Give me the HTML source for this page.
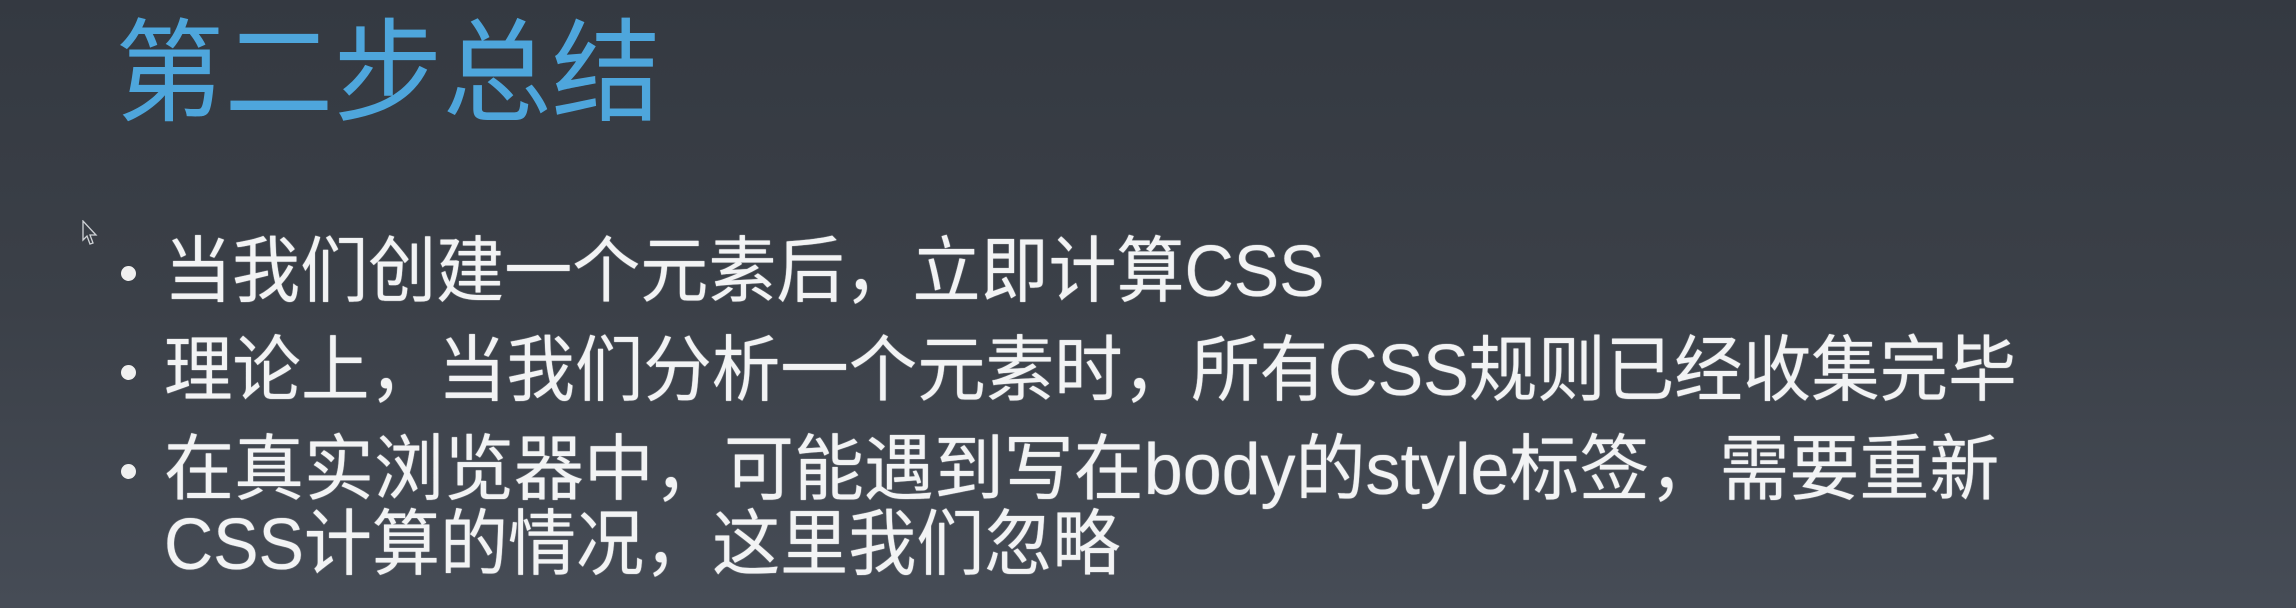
<!DOCTYPE html>
<html><head><meta charset="utf-8"><style>
html,body{margin:0;padding:0}
body{width:2296px;height:608px;overflow:hidden;position:relative;
background:linear-gradient(180deg,#343941 0%,#3b4048 50%,#464c56 100%);
font-family:"Liberation Sans","Noto Sans CJK SC",sans-serif;}
.t{position:absolute;left:115px;top:18px;font-size:112px;line-height:112px;color:#4ea6dc;white-space:nowrap;transform:scaleX(.975);transform-origin:left center}
.l{position:absolute;left:164px;font-size:72px;line-height:72px;color:#f2f3f4;white-space:nowrap;transform:scaleX(.945);transform-origin:left center;text-shadow:0 0 1px #f2f3f4}
.d{position:absolute;left:121px;width:15px;height:15px;border-radius:50%;background:#f0f0f0}
.cur{position:absolute;left:82px;top:220px}
</style></head><body>
<div class="t">第二步总结</div>
<svg class="cur" width="16" height="26" viewBox="0 0 16 26"><path d="M1 1 L1 20 L5 16 L8 24 L11 23 L8 15 L14 15 Z" fill="#3a3f47" stroke="#cfd2d6" stroke-width="1.3"/></svg>
<div class="d" style="top:266px"></div>
<div class="l" style="top:236px">当我们创建一个元素后，立即计算CSS</div>
<div class="d" style="top:365px"></div>
<div class="l" style="top:335px;transform:scaleX(.951)">理论上，当我们分析一个元素时，所有CSS规则已经收集完毕</div>
<div class="d" style="top:464px"></div>
<div class="l" style="top:434px;transform:scaleX(.972)">在真实浏览器中，可能遇到写在body的style标签，需要重新</div>
<div class="l" style="top:509px">CSS计算的情况，这里我们忽略</div>
</body></html>
